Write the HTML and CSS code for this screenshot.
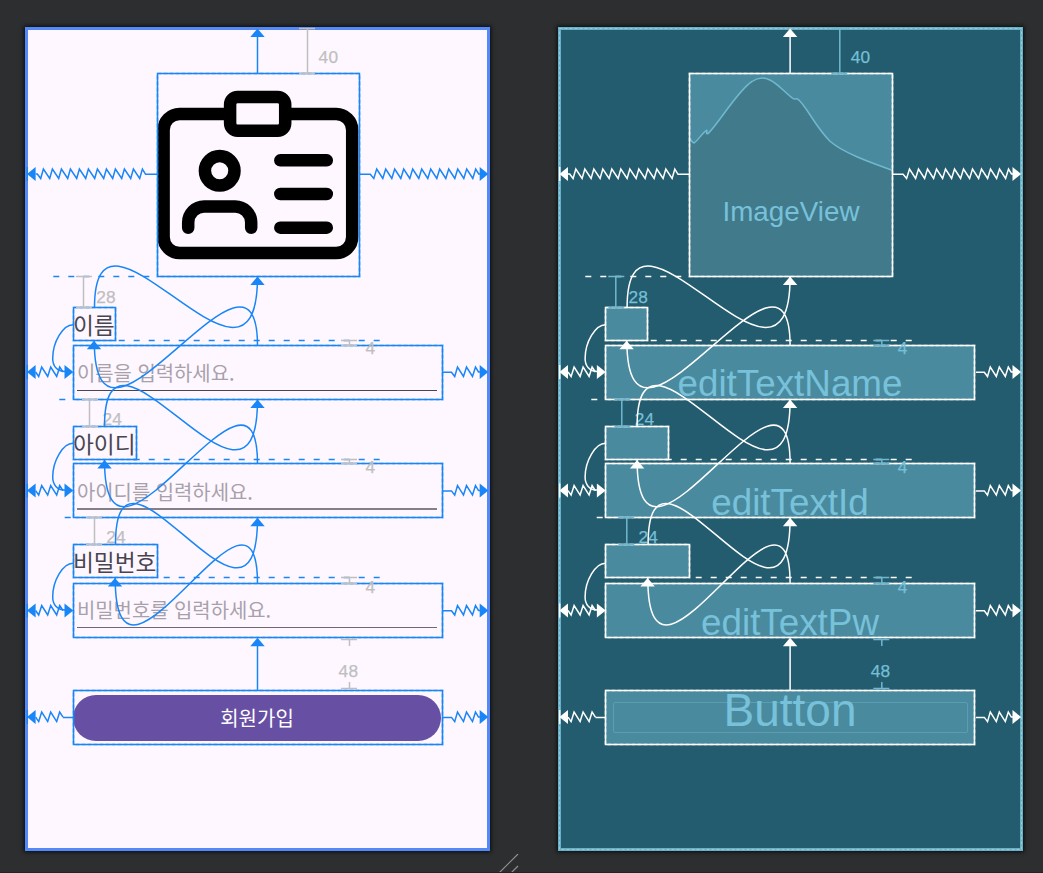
FILE: index.html
```html
<!DOCTYPE html>
<html lang="ko">
<head>
<meta charset="utf-8">
<title>Layout Editor</title>
<link rel="stylesheet" href="styles.css">
</head>
<body>
<main class="surface">
  <section class="screen design">
    <div class="widget image">
      <svg class="card-icon" viewBox="157 73 203 204">
        <rect x="163.6" y="114" width="188.6" height="139" rx="16"/>
        <rect class="clip" x="230.1" y="97" width="55.1" height="33.8" rx="7.5"/>
        <circle cx="219.7" cy="170.8" r="14.8"/>
        <path d="M188.2 227.8V222.500a16 16 0 0 1 16-16h31a16 16 0 0 1 16 16V227.800M280.300 160.300H326.800M280.300 194H326.800M280.300 227.700H326.800"/>
      </svg>
    </div>
    <label class="widget label name">이름</label>
    <div class="widget field name-field"><span class="hint">이름을 입력하세요.</span></div>
    <label class="widget label id">아이디</label>
    <div class="widget field id-field"><span class="hint">아이디를 입력하세요.</span></div>
    <label class="widget label pw">비밀번호</label>
    <div class="widget field pw-field"><span class="hint">비밀번호를 입력하세요.</span></div>
    <div class="widget action"><button class="pill">회원가입</button></div>

    <svg class="overlay" viewBox="25 27 465 824">
      <defs>
        <g id="boxes">
          <rect x="73.5" y="307.5" width="42" height="33"/>
          <rect x="73.5" y="345.5" width="369" height="54"/>
          <rect x="73.5" y="426.500" width="63" height="33"/>
          <rect x="73.5" y="463.5" width="369" height="54"/>
          <rect x="73.5" y="544.5" width="84" height="33"/>
          <rect x="73.5" y="583.5" width="369" height="54"/>
          <rect x="73.5" y="690.5" width="369" height="54"/>
        </g>
        <path id="up" d="M0 0L7.200 8.500H-7.200Z"/>
        <g id="spring-left">
          <path class="solid" d="M27 0L35.600-7V7Z"/>
          <path d="M27.300-7V7M35.600 0l3.100 4.500 3-9.500 6 9.500 3-9.500 6 9.500 3-9.500 3.300 5"/>
        </g>
        <g id="spring-right">
          <path class="solid" d="M488.300 0L479.700-7V7Z"/>
          <path d="M443 .3H451.500l3.200 4.200 2.800-9.500 6 9.500 3-9.500 6 9.500 3-9.500 3 5h2"/>
        </g>
        <g id="align-start">
          <path class="solid" d="M73.300 0L64.500-7V7Z"/>
          <path d="M73-47.300C63-47.300 52.700-30 52.700-13.500C52.700-6 57-.5 65-.5"/>
        </g>
        <g id="edge-left">
          <path class="solid" d="M27 174L35.600 167V181Z"/>
          <path d="M27.300 167V181M35.600 174H37.300l3.400 4.500 2.700-9.500 6.300 9.500 2.700-9.500 6.300 9.500 2.700-9.500 6.300 9.500 2.700-9.500 6.300 9.500 2.700-9.500 6.300 9.500 2.700-9.500 6.300 9.500 2.700-9.500 6.300 9.500 2.700-9.500 6.300 9.500 2.700-9.500 6.300 9.500 2.700-9.500 6.300 9.500 2.700-9.500 6.300 9.500 2.700-9.500 3.200 5.300H157.500"/>
          <use href="#spring-left" y="372"/>
          <use href="#spring-left" y="490.600"/>
          <use href="#spring-left" y="610.500"/>
          <use href="#spring-left" y="717.100"/>
          <path d="M63 717.500H73.500"/>
          <use href="#align-start" y="372"/>
          <use href="#align-start" y="490.600"/>
          <use href="#align-start" y="610.500"/>
        </g>
        <g id="edge-right">
          <path class="solid" d="M488.300 174L479.700 167V181Z"/>
          <path d="M360 174.300H370.300l3.500 4.200 2.900-9.500 6.100 9.500 2.900-9.500 6.100 9.500 2.900-9.500 6.100 9.500 2.900-9.500 6.100 9.500 2.900-9.500 6.100 9.500 2.900-9.500 6.100 9.500 2.900-9.500 6.100 9.500 2.900-9.500 6.100 9.500 2.900-9.500 6.100 9.500 2.900-9.500 6.100 9.500 2.900-9.500 6.100 9.500 2.900-9.500 3 5h2"/>
          <use href="#spring-right" y="372"/>
          <use href="#spring-right" y="490.600"/>
          <use href="#spring-right" y="610.500"/>
          <use href="#spring-right" y="717.100"/>
        </g>
        <g id="guides">
          <path stroke-dasharray="6 9" d="M53.300 276.500H152M118.700 340.500H380M133.700 459.500H380M163.700 577.500H380M59.300 399.500H68M64.700 517.500H72"/>
        </g>
        <g id="curves">
          <path d="M257.500 36V73.500M257.500 645V690.500"/>
          <path d="M94.500 307.500C94.500 170 257.500 431 257.500 277M257.500 345.500C257.500 208 94.300 495 94.300 341"/>
          <path d="M104.500 426.500C104.500 289 257.500 554 257.500 400M257.500 463.500C257.500 326 104.500 614 104.500 460"/>
          <path d="M115.500 544.500C115.500 407 257.500 672 257.500 518M257.500 583.500C257.500 446 115.200 732 115.200 578"/>
          <g class="solid">
            <use href="#up" x="257.500" y="28.500"/>
            <use href="#up" x="257.500" y="276.500"/>
            <use href="#up" x="257.500" y="399.500"/>
            <use href="#up" x="257.500" y="517.800"/>
            <use href="#up" x="257.500" y="637.800"/>
            <use href="#up" x="94" y="340.800"/>
            <use href="#up" x="104.500" y="460"/>
            <use href="#up" x="115" y="578"/>
          </g>
        </g>
        <g id="ticks">
          <path d="M299 28.500H315M307.500 28.500V73.500M299 73.500H315M76 276.500H92M83.500 276.500V307.500M76 307.500H92M82 399.500H98M89.500 399.500V426.500M82 426.500H98M86 517.500H102M94.500 517.500V544.500M86 544.500H102M341 340.500H357M349.500 340.500V345.500M341 345.500H357M341 459.500H357M349.500 459.500V463.500M341 463.500H357M341 577.500H357M349.500 577.500V583.500M341 583.500H357M341 639.500H357M349.500 639.500V646M341 688.500H357M349.500 682V688.500"/>
        </g>
        <g id="margins">
          <text x="318.600" y="63">40</text>
          <text x="96.300" y="302.500">28</text>
          <text x="365.500" y="353.500">4</text>
          <text x="102.500" y="425">24</text>
          <text x="365.500" y="472.800">4</text>
          <text x="106.300" y="542.500">24</text>
          <text x="365.500" y="592.500">4</text>
          <text x="338.600" y="677">48</text>
        </g>
      </defs>
      <g class="wire">
        <g class="halo"><rect x="157.500" y="73.500" width="202" height="203"/><use href="#boxes"/></g>
        <rect x="157.500" y="73.500" width="202" height="203"/>
        <use href="#boxes"/>
        <use class="guide" href="#guides"/>
      </g>
      <g class="measure"><use href="#ticks"/><use class="numbers" href="#margins"/></g>
      <g class="wire"><use href="#edge-left"/><use href="#edge-right"/><use href="#curves"/></g>
    </svg>
  </section>

  <section class="screen blueprint">
    <div class="widget image">
      <svg class="wave" viewBox="689 73 204 204">
        <path class="hill" d="M689 138C691 139 692 143 694 143C697 142 702 133 706.500 130.300C708 130 705 135 708 133.500C717 126 738 90 752 81.500C758 77.500 765 77.500 770 80C779 84.500 785 93 793 98.500C795 100 796 98.400 797.500 98.900C806 105 814 125 830 141.300C844 153.500 872 163 894 171V278H689Z"/>
      </svg>
      <span class="caption">ImageView</span>
    </div>
    <div class="widget label name"></div>
    <div class="widget field name-field"><span class="caption">editTextName</span></div>
    <div class="widget label id"></div>
    <div class="widget field id-field"><span class="caption">editTextId</span></div>
    <div class="widget label pw"></div>
    <div class="widget field pw-field"><span class="caption">editTextPw</span></div>
    <div class="widget action"><span class="inset"></span><span class="caption">Button</span></div>

    <svg class="overlay" viewBox="26 27 465 824">
      <rect class="frame-dash" x="27.500" y="28.500" width="462" height="821"/>
      <g class="wire">
        <g class="halo"><rect x="157.500" y="73.500" width="203" height="203"/><use href="#boxes"/></g>
        <rect x="157.500" y="73.500" width="203" height="203"/>
        <use href="#boxes"/>
        <use class="guide" href="#guides"/>
      </g>
      <g class="measure"><use href="#ticks" x=".3"/><use class="numbers" href="#margins" x=".2"/></g>
      <g class="wire"><use href="#edge-left" x=".4"/><use href="#edge-right" x=".8"/><use href="#curves" x=".6"/></g>
    </svg>
  </section>

  <svg class="grip" viewBox="0 0 20 19"><path d="M0 19L19 0M12 19L19 12"/></svg>
</main>
</body>
</html>
```

FILE: styles.css
```css
* { box-sizing: border-box; }

body {
  margin: 0;
  background: #2d2e30;
  font-family: "Liberation Sans", "Noto Sans CJK KR", sans-serif;
}

.surface {
  position: relative;
  display: flex;
  gap: 68px;
  width: 1043px;
  height: 873px;
  padding: 27px 0 0 25px;
  overflow: hidden;
  border-bottom: 1px solid #222325;
}

.screen {
  position: relative;
  display: flex;
  flex-direction: column;
  width: 465px;
  height: 824px;
  border: 3px solid #548af7;
  box-shadow: 0 0 4px 1px #0b0c0d;
}

.design {
  padding: 43px 44px 0 45px;
  background: #fef7ff;
  font-family: "Noto Sans CJK KR", sans-serif;
}

.blueprint {
  padding: 43px 45px 0 44px;
  background: #235c6e;
  border-color: #69afc5;
}

.widget { flex: none; display: flex; }
.blueprint .widget { justify-content: center; background: #4a8a9e; }

.image { position: relative; width: 203px; height: 204px; margin-left: 84px; }
.blueprint .image { width: 204px; }
.label { height: 34px; align-items: center; white-space: nowrap; color: #49454f; font-size: 22.7px; line-height: 33px; }
.field { height: 55px; }
.name { width: 43px; margin-top: 30px; }
.id { width: 64px; margin-top: 26px; }
.pw { width: 85px; margin-top: 26px; }
.name-field { margin-top: 4px; }
.id-field { margin-top: 3px; }
.pw-field { margin-top: 5px; }
.action { height: 55px; margin-top: 52px; }

.card-icon { width: 203px; height: 204px; fill: none; stroke: #000; stroke-width: 12.5; stroke-linecap: round; }
.card-icon .clip { fill: #fef7ff; }

.design .field { padding: 0 6px 0 4px; }
.hint {
  width: 360px;
  height: 46px;
  border-bottom: 1px solid #49454f;
  color: #a7a1aa;
  font-size: 19.9px;
  line-height: 55px;
}
.id-field .hint { border-bottom: 2px solid #857f88; height: 47px; line-height: 57px; }
.pw-field .hint { height: 45px; border-color: #6d6872; line-height: 54px; }

.pill {
  width: 368px;
  height: 46px;
  margin-top: 5px;
  padding: 0;
  border: 0;
  border-radius: 23px;
  background: #674fa3;
  color: #fff;
  font: 400 20px/46px "Noto Sans CJK KR", sans-serif;
}

.caption { color: #77c1da; white-space: nowrap; }
.blueprint .field .caption { font-size: 36.8px; line-height: 78px; height: 55px; }
.blueprint .pw-field .caption, .blueprint .id-field .caption { line-height: 80px; }
.blueprint .image .caption { position: relative; font-size: 27.8px; line-height: 278px; height: 204px; }
.blueprint .action { position: relative; }
.action .caption { position: relative; font-size: 46px; line-height: 41px; height: 55px; }
.inset { position: absolute; top: 12px; left: 8px; width: 355px; height: 31px; border: 1px solid #5b9db2; border-radius: 2px; }

.wave { position: absolute; inset: 0; width: 204px; height: 204px; }
.hill { fill: #417a8b; stroke: #70b8cf; stroke-width: 1.5; }

.overlay { position: absolute; top: -3px; left: -3px; width: 465px; height: 824px; overflow: visible; pointer-events: none; }
.design .overlay { color: #1886f7; }
.blueprint .overlay { color: #fff; }
.wire { fill: none; stroke: currentColor; stroke-width: 1.5; }
.solid { fill: currentColor; stroke: none; }
.halo { stroke-width: 2.2; stroke-dasharray: 4 2; stroke-opacity: .4; }
.guide { stroke-width: 1.5; }
.measure { fill: none; stroke: #bfbfbf; stroke-width: 1.5; }
.numbers { fill: #bfbfbf; stroke-width: .25; font: 17.3px "Liberation Sans", sans-serif; letter-spacing: .2px; }
.blueprint .measure { stroke: #70b8d0; }
.blueprint .numbers { fill: #77c1da; }
.frame-dash { fill: none; stroke: #8fcbdd; stroke-width: 1; stroke-dasharray: 3 2; }

.grip { position: absolute; left: 499px; top: 854px; width: 20px; height: 19px; fill: none; stroke: #909193; stroke-width: 1.2; }
```
